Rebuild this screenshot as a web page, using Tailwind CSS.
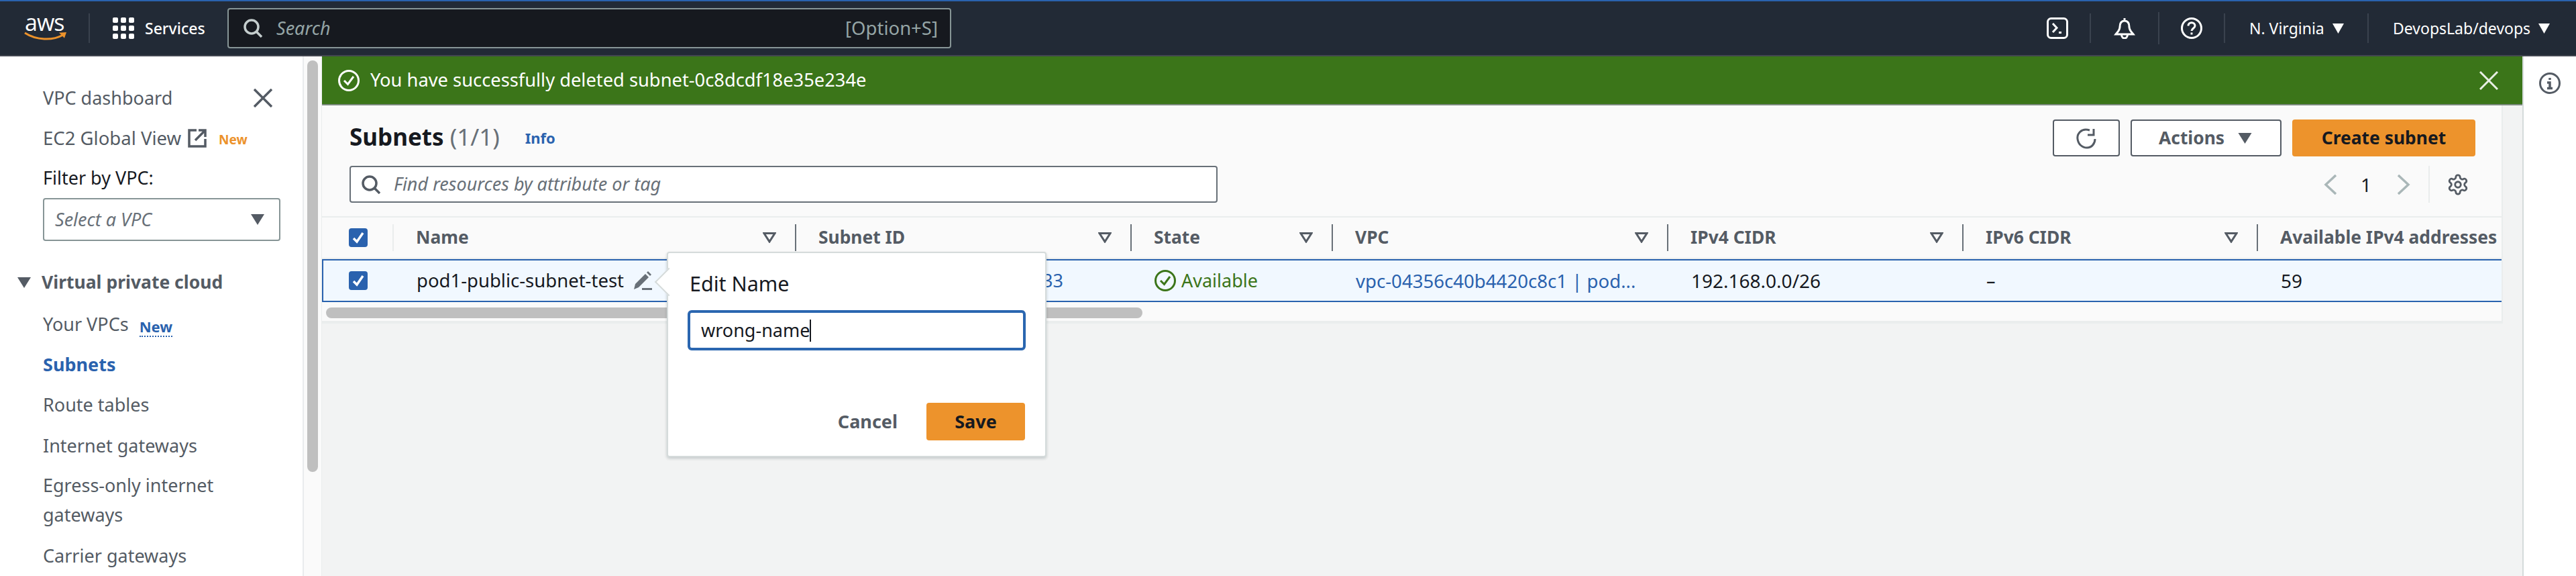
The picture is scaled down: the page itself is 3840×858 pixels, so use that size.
<!DOCTYPE html>
<html lang="en">
<head>
  <meta charset="UTF-8">
  <title>Subnets | VPC Console</title>
  <script src="https://cdn.jsdelivr.net/npm/@tailwindcss/browser@4"></script>
</head>
<body class="h-screen overflow-hidden flex flex-col bg-[#f2f3f3] font-['Noto_Sans',sans-serif] text-[27px] text-[#16191f]">

  <!-- top nav -->
  <nav class="h-[84px] shrink-0 border-t-2 border-b-2 border-t-[#2a62ae] border-b-[#424650] bg-[#222a36] flex items-center text-white">
    <div class="w-[134px] h-[44px] pl-[36px] border-r-2 border-[#3a424e] flex flex-col">
      <span class="font-['Open_Sans',sans-serif] text-[34px] leading-[26px] pl-[1px] tracking-[-1px]">aws</span>
      <svg class="w-[64px] h-[14px] mt-[1px]" viewBox="0 0 64 14" fill="none">
        <path d="M1 2 C18 13 42 14 58 5" stroke="#ec922b" stroke-width="3"/>
        <path d="M52 1 L63 0 L60 11 Z" fill="#ec922b" transform="translate(0 1) scale(1 .8)"/>
      </svg>
    </div>
    <svg class="ml-[34px] w-[32px] h-[32px]" viewBox="0 0 32 32" fill="#fff">
      <rect x="0" y="0" width="8" height="8" rx="2"/><rect x="12" y="0" width="8" height="8" rx="2"/><rect x="24" y="0" width="8" height="8" rx="2"/>
      <rect x="0" y="12" width="8" height="8" rx="2"/><rect x="12" y="12" width="8" height="8" rx="2"/><rect x="24" y="12" width="8" height="8" rx="2"/>
      <rect x="0" y="24" width="8" height="8" rx="2"/><rect x="12" y="24" width="8" height="8" rx="2"/><rect x="24" y="24" width="8" height="8" rx="2"/>
    </svg>
    <span class="ml-[16px] w-[123px] text-[23px] font-medium">Services</span>
    <div class="w-[1079px] h-[60px] rounded-[4px] border-2 border-[#879596] bg-[#16191f] flex items-center px-[22px] pr-[18px] text-[#95a5a6]">
      <svg class="w-[28px] h-[28px] shrink-0" viewBox="0 0 28 28" fill="none" stroke="#c4cdcd" stroke-width="3.5"><circle cx="12" cy="12" r="10"/><path d="M19 19 L27 27"/></svg>
      <span class="ml-[21px] italic">Search</span>
      <span class="ml-auto text-[27.5px]">[Option+S]</span>
    </div>
    <div class="ml-auto flex items-center h-[48px] text-[23px]">
      <div class="w-[98px] h-[44px] border-r-2 border-[#3a424e] flex items-center justify-center">
        <svg class="w-[32px] h-[32px]" viewBox="0 0 32 32" fill="none" stroke="#fff" stroke-width="3"><rect x="1.5" y="1.5" width="29" height="29" rx="5"/><path d="M9 9 L15 15.5 L9 22"/><path d="M18 22.5 H22"/></svg>
      </div>
      <div class="w-[102px] h-[48px] border-r-2 border-[#3a424e] flex items-center justify-center">
        <svg class="w-[32px] h-[32px]" viewBox="0 0 32 32" fill="none" stroke="#fff" stroke-width="3"><path d="M16 1 V5 M16 5 C10 5 9 10 9 14 C9 19 6 21 3 25 H29 C26 21 23 19 23 14 C23 10 22 5 16 5 Z"/><path d="M11.5 25 C11.5 33 20.5 33 20.5 25"/></svg>
      </div>
      <div class="w-[98px] h-[44px] border-r-2 border-[#3a424e] flex items-center justify-center">
        <svg class="w-[32px] h-[32px]" viewBox="0 0 32 32" fill="none" stroke="#fff" stroke-width="3"><circle cx="16" cy="16" r="14.5"/><path d="M11 12.5 C11 6 21 6 21 12.5 C21 16 16 16.5 16 20"/><path d="M16 22.5 V25.5"/></svg>
      </div>
      <div class="w-[214px] h-[44px] pl-[36px] border-r-2 border-[#3a424e] flex items-center">
        <span>N. Virginia</span>
        <svg class="ml-[12px] w-[17px] h-[15px]" viewBox="0 0 17 15" fill="#fff"><path d="M0 0 H17 L8.5 15 Z"/></svg>
      </div>
      <div class="w-[309px] pl-[36px] flex items-center">
        <span>DevopsLab/devops</span>
        <svg class="ml-[12px] w-[17px] h-[15px]" viewBox="0 0 17 15" fill="#fff"><path d="M0 0 H17 L8.5 15 Z"/></svg>
      </div>
    </div>
  </nav>

  <div class="flex-1 min-h-0 flex">
    <!-- side nav -->
    <aside class="w-[453px] shrink-0 bg-white border-r-2 border-[#e9ebed] pl-[64px] pt-[42px] text-[#545b64] relative">
      <div class="h-[40px] flex items-center">
        <span>VPC dashboard</span>
        <svg class="ml-auto mr-[45px] w-[28px] h-[28px]" viewBox="0 0 28 28" stroke="#545b64" stroke-width="3.5"><path d="M1 1 L27 27 M27 1 L1 27"/></svg>
      </div>
      <div class="h-[40px] mt-[20px] flex items-center">
        <span class="text-[27.5px]">EC2 Global View</span>
        <svg class="ml-[10px] w-[28px] h-[28px]" viewBox="0 0 28 28" fill="none" stroke="#545b64" stroke-width="3.5"><path d="M13 2 H2 V26 H26 V15"/><path d="M11 17 L25 3 M16 2 H26 V12"/></svg>
        <span class="ml-[18px] mt-[4px] text-[19px] font-bold text-[#ec922b]">New</span>
      </div>
      <div class="h-[40px] mt-[19px] flex items-center text-[#16191f]">Filter by VPC:</div>
      <div class="w-[354px] h-[64px] mt-[10px] rounded-[4px] border-2 border-[#879596] flex items-center pl-[16px] pr-[22px]">
        <span class="italic text-[#687078]">Select a VPC</span>
        <svg class="ml-auto w-[20px] h-[16px]" viewBox="0 0 20 16" fill="#545b64"><path d="M0 0 H20 L10 16 Z"/></svg>
      </div>
      <div class="h-[40px] mt-[42px] -ml-[38px] flex items-center font-bold">
        <svg class="w-[20px] h-[16px] mr-[16px]" viewBox="0 0 20 16" fill="#545b64"><path d="M0 0 H20 L10 16 Z"/></svg>
        <span class="text-[26.5px]">Virtual private cloud</span>
      </div>
      <div class="h-[40px] mt-[22px] flex items-center">
        <span>Your VPCs</span>
        <span class="ml-[16px] mt-[8px] text-[22px] font-bold text-[#2a62ae] border-b-2 border-dotted border-[#2a62ae] leading-[28px]">New</span>
      </div>
      <div class="h-[40px] mt-[20px] flex items-center font-bold text-[#2a62ae]">Subnets</div>
      <div class="h-[40px] mt-[20px] flex items-center">Route tables</div>
      <div class="h-[40px] mt-[21px] flex items-center">Internet gateways</div>
      <div class="mt-[17px] leading-[44px] w-[340px]">Egress-only internet gateways</div>
      <div class="h-[40px] mt-[19px] flex items-center">Carrier gateways</div>
    </aside>
    <div class="w-[27px] shrink-0 bg-[#fafafa] pl-[5px] pt-[6px] border-r border-[#eaeded]">
      <div class="w-[16px] h-[613px] rounded-full bg-[#bfbfbf]"></div>
    </div>

    <main class="flex-1 min-w-0 flex flex-col relative">
      <!-- flash -->
      <div class="h-[73px] shrink-0 bg-[#3b7519] border-b-2 border-[#7d8b80] flex items-center pl-[24px] pr-[36px] text-white">
        <svg class="w-[32px] h-[32px]" viewBox="0 0 32 32" fill="none" stroke="#fff" stroke-width="3"><circle cx="16" cy="16" r="14.5"/><path d="M9 16 L14.5 21.5 L23 10"/></svg>
        <span class="ml-[16px] text-[27.3px]">You have successfully deleted subnet-0c8dcdf18e35e234e</span>
        <svg class="ml-auto w-[28px] h-[28px]" viewBox="0 0 28 28" stroke="#e8eee4" stroke-width="3"><path d="M1 1 L27 27 M27 1 L1 27"/></svg>
      </div>

      <!-- subnets table card -->
      <section class="w-[3251px] bg-[#fafafa] border-r-2 border-b-4 border-r-[#eaeded] border-b-[#eaeded]">
        <div class="h-[165px] pl-[41px] pr-[39px] pt-[21px]">
          <div class="h-[55px] flex items-center">
            <h1 class="text-[35px] leading-none font-bold -mt-[4px]">Subnets <span class="font-normal text-[#687078]">(1/1)</span></h1>
            <span class="ml-[38px] text-[22px] font-bold text-[#2a62ae]">Info</span>
            <button class="ml-auto w-[100px] h-[55px] rounded-[4px] bg-white border-2 border-[#545b64] flex items-center justify-center">
              <svg class="w-[32px] h-[32px]" viewBox="0 0 32 32" fill="none" stroke="#545b64" stroke-width="3"><path d="M21 4 C8 0 2 10 3 17 C4 25 10 30 17 30 C24 30 29 24 29 17"/><path d="M27 2 V11 H18"/></svg>
            </button>
            <button class="ml-[16px] w-[225px] h-[55px] rounded-[4px] bg-white border-2 border-[#545b64] flex items-center pl-[40px] font-bold text-[#545b64] text-[26.4px]">
              <span>Actions</span>
              <svg class="ml-[20px] w-[21px] h-[16px]" viewBox="0 0 20 16" fill="#545b64"><path d="M0 0 H20 L10 16 Z"/></svg>
            </button>
            <button class="ml-[16px] w-[273px] h-[55px] rounded-[4px] bg-[#ed932c] font-bold text-[26.4px]">Create subnet</button>
          </div>
          <div class="h-[55px] mt-[14px] flex items-center">
            <div class="w-[1294px] h-[55px] rounded-[4px] bg-white border-2 border-[#687078] flex items-center pl-[16px] text-[#687078]">
              <svg class="w-[28px] h-[28px]" viewBox="0 0 28 28" fill="none" stroke="#545b64" stroke-width="3.5"><circle cx="12" cy="12" r="10"/><path d="M19 19 L27 27"/></svg>
              <span class="ml-[20px] italic">Find resources by attribute or tag</span>
            </div>
            <svg class="ml-auto w-[20px] h-[30px]" viewBox="0 0 20 30" fill="none" stroke="#aab7b8" stroke-width="3.5"><path d="M18 1 L3 15 L18 29"/></svg>
            <span class="ml-[35px] text-[28px]">1</span>
            <svg class="ml-[38px] w-[20px] h-[30px]" viewBox="0 0 20 30" fill="none" stroke="#aab7b8" stroke-width="3.5"><path d="M2 1 L17 15 L2 29"/></svg>
            <div class="ml-[27px] w-[2px] h-[55px] bg-[#eaeded]"></div>
            <svg class="ml-[25px] mr-[9px] w-[34px] h-[34px]" viewBox="0 0 24 24" fill="none" stroke="#545b64" stroke-width="2"><path d="M12.22 2h-.44a2 2 0 0 0-2 2v.18a2 2 0 0 1-1 1.73l-.43.25a2 2 0 0 1-2 0l-.15-.08a2 2 0 0 0-2.73.73l-.22.38a2 2 0 0 0 .73 2.73l.15.1a2 2 0 0 1 1 1.72v.51a2 2 0 0 1-1 1.74l-.15.09a2 2 0 0 0-.73 2.73l.22.38a2 2 0 0 0 2.73.73l.15-.08a2 2 0 0 1 2 0l.43.25a2 2 0 0 1 1 1.73V20a2 2 0 0 0 2 2h.44a2 2 0 0 0 2-2v-.18a2 2 0 0 1 1-1.73l.43-.25a2 2 0 0 1 2 0l.15.08a2 2 0 0 0 2.73-.73l.22-.39a2 2 0 0 0-.73-2.73l-.15-.08a2 2 0 0 1-1-1.74v-.5a2 2 0 0 1 1-1.74l.15-.09a2 2 0 0 0 .73-2.73l-.22-.38a2 2 0 0 0-2.73-.73l-.15.08a2 2 0 0 1-2 0l-.43-.25a2 2 0 0 1-1-1.73V4a2 2 0 0 0-2-2z"/><circle cx="12" cy="12" r="3"/></svg>
          </div>
        </div>

        <!-- header row -->
        <div class="h-[64px] border-t-2 border-b-2 border-[#eaeded] grid grid-cols-[107px_600px_500px_300px_500px_440px_439px_1fr] items-center font-bold text-[#545b64] text-[26.4px]">
          <div class="h-[40px] pl-[40px] border-r-2 border-[#eaeded] flex items-center">
            <span class="w-[28px] h-[28px] rounded-[4px] bg-[#2a62ae] flex items-center justify-center"><svg class="w-[18px] h-[18px]" viewBox="0 0 18 18" fill="none" stroke="#fff" stroke-width="3.5"><path d="M2 10 L7 15 L16 2"/></svg></span>
          </div>
          <div class="h-[40px] pl-[33px] pr-[28px] border-r-2 border-[#687078] flex items-center justify-between"><span>Name</span><svg class="w-[20px] h-[16px]" viewBox="0 0 20 16" fill="none" stroke="#545b64" stroke-width="3"><path d="M2 1.5 H18 L10 14 Z"/></svg></div>
          <div class="h-[40px] pl-[33px] pr-[28px] border-r-2 border-[#687078] flex items-center justify-between"><span>Subnet ID</span><svg class="w-[20px] h-[16px]" viewBox="0 0 20 16" fill="none" stroke="#545b64" stroke-width="3"><path d="M2 1.5 H18 L10 14 Z"/></svg></div>
          <div class="h-[40px] pl-[33px] pr-[28px] border-r-2 border-[#687078] flex items-center justify-between"><span>State</span><svg class="w-[20px] h-[16px]" viewBox="0 0 20 16" fill="none" stroke="#545b64" stroke-width="3"><path d="M2 1.5 H18 L10 14 Z"/></svg></div>
          <div class="h-[40px] pl-[33px] pr-[28px] border-r-2 border-[#687078] flex items-center justify-between"><span>VPC</span><svg class="w-[20px] h-[16px]" viewBox="0 0 20 16" fill="none" stroke="#545b64" stroke-width="3"><path d="M2 1.5 H18 L10 14 Z"/></svg></div>
          <div class="h-[40px] pl-[33px] pr-[28px] border-r-2 border-[#687078] flex items-center justify-between"><span>IPv4 CIDR</span><svg class="w-[20px] h-[16px]" viewBox="0 0 20 16" fill="none" stroke="#545b64" stroke-width="3"><path d="M2 1.5 H18 L10 14 Z"/></svg></div>
          <div class="h-[40px] pl-[33px] pr-[28px] border-r-2 border-[#687078] flex items-center justify-between"><span>IPv6 CIDR</span><svg class="w-[20px] h-[16px]" viewBox="0 0 20 16" fill="none" stroke="#545b64" stroke-width="3"><path d="M2 1.5 H18 L10 14 Z"/></svg></div>
          <div class="h-[40px] pl-[33px] flex items-center whitespace-nowrap overflow-hidden">Available IPv4 addresses</div>
        </div>

        <!-- selected row -->
        <div class="h-[64px] border-2 border-r-0 border-[#2a62ae] bg-[#f1f8ff] grid grid-cols-[105px_600px_500px_300px_500px_440px_439px_1fr] items-center leading-[36px]">
          <div class="pl-[38px] flex items-center">
            <span class="w-[28px] h-[28px] rounded-[4px] bg-[#2a62ae] flex items-center justify-center"><svg class="w-[18px] h-[18px]" viewBox="0 0 18 18" fill="none" stroke="#fff" stroke-width="3.5"><path d="M2 10 L7 15 L16 2"/></svg></span>
          </div>
          <div class="pl-[34px] flex items-center">
            <span class="text-[27.5px]">pod1-public-subnet-test</span>
            <svg class="ml-[14px] w-[28px] h-[28px]" viewBox="0 0 28 28" fill="#687078"><path d="M1 27 L3 19 L18 4 L23 9 L8 24 Z"/><path d="M20 2 L22 0 L27 5 L25 7 Z"/><rect x="13" y="25" width="15" height="3"/></svg>
          </div>
          <div class="pr-[102px] text-right text-[#2a62ae] whitespace-nowrap">subnet-0d2c8a1f7b9e43a33</div>
          <div class="pl-[34px] flex items-center text-[#3b7519]">
            <svg class="w-[32px] h-[32px]" viewBox="0 0 32 32" fill="none" stroke="#3b7519" stroke-width="3"><circle cx="16" cy="16" r="14.5"/><path d="M9 16 L14.5 21.5 L23 10"/></svg>
            <span class="ml-[8px]">Available</span>
          </div>
          <div class="pl-[34px] text-[#2a62ae] whitespace-nowrap text-[27.6px]">vpc-04356c40b4420c8c1 | pod...</div>
          <div class="pl-[34px] text-[28px]">192.168.0.0/26</div>
          <div class="pl-[34px]">–</div>
          <div class="pl-[34px] text-[28px]">59</div>
        </div>

        <!-- horizontal scrollbar -->
        <div class="h-[28px] pt-[8px] pl-[6px]">
          <div class="w-[1217px] h-[16px] rounded-full bg-[#bfbfbf]"></div>
        </div>
      </section>

      <!-- edit name popover -->
      <div class="absolute left-[514px] top-[291px] w-[566px] h-[306px] rounded-[4px] bg-white border-2 border-[#d5dbdb] shadow-[0_2px_4px_rgba(0,28,36,0.2)] pl-[32px] pr-[30px]">
        <div class="absolute -left-[14px] top-[28px] w-[30px] h-[30px] rotate-45 bg-white border-l-2 border-b-2 border-[#d5dbdb]"></div>
        <div class="relative pt-[26px] h-[85px] text-[30.5px] leading-[38px]">Edit Name</div>
        <div class="relative -ml-[3px] w-[504px] h-[60px] rounded-[6px] border-4 border-[#2a66b0] flex items-center pl-[16px]">
          <span>wrong-name</span><span class="w-[2px] h-[33px] bg-[#16191f]"></span>
        </div>
        <div class="mt-[78px] flex items-center justify-end">
          <span class="font-bold text-[#545b64] text-[27px]">Cancel</span>
          <button class="ml-[43px] w-[147px] h-[56px] rounded-[4px] bg-[#ed932c] font-bold text-[27px]">Save</button>
        </div>
      </div>
    </main>

    <aside class="w-[80px] shrink-0 bg-white border-l-2 border-[#d5dbdb] flex justify-center pt-[24px]">
      <svg class="w-[32px] h-[32px]" viewBox="0 0 32 32" fill="none" stroke="#545b64" stroke-width="3"><circle cx="16" cy="16" r="14.5"/><path d="M16 8 V11 M12 15 H16 V23 M12 23.5 H20" stroke-width="3.5"/></svg>
    </aside>
  </div>
</body>
</html>
